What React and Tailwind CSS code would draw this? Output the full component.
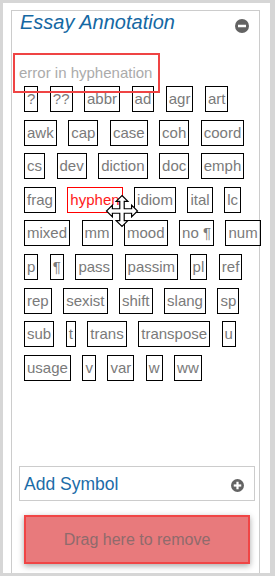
import React from "react";

const rows = [
  "?", "??", "abbr", "ad", "agr", "art",
  "awk", "cap", "case", "coh", "coord",
  "cs", "dev", "diction", "doc", "emph",
  "frag", "hyphen", "idiom", "ital", "lc",
  "mixed", "mm", "mood", "no ¶", "num",
  "p", "¶", "pass", "passim", "pl", "ref",
  "rep", "sexist", "shift", "slang", "sp",
  "sub", "t", "trans", "transpose", "u",
  "usage", "v", "var", "w", "ww",
];

function MoveCursor() {
  return (
    <svg width="34" height="34" viewBox="-1 -1 23 23">
      <path
        d="M10.5 0 L14.5 4 L12 4 L12 9 L17 9 L17 6.5 L21 10.5 L17 14.5 L17 12 L12 12 L12 17 L14.5 17 L10.5 21 L6.5 17 L9 17 L9 12 L4 12 L4 14.5 L0 10.5 L4 6.5 L4 9 L9 9 L9 4 L6.5 4 Z"
        fill="#ffffff"
        stroke="#000000"
        strokeWidth="0.8"
        strokeLinejoin="miter"
      />
    </svg>
  );
}

function MinusCircle() {
  return (
    <svg width="14" height="14" viewBox="0 0 14 14" className="mt-[8px]">
      <circle cx="7" cy="7" r="7" fill="#636363" />
      <rect x="3" y="5.75" width="8" height="2.5" fill="#ffffff" />
    </svg>
  );
}

function PlusCircle() {
  return (
    <svg width="13" height="13" viewBox="0 0 13 13" className="mt-[4px]">
      <circle cx="6.5" cy="6.5" r="6.5" fill="#636363" />
      <rect x="2.75" y="5.4" width="7.5" height="2.2" fill="#ffffff" />
      <rect x="5.4" y="2.75" width="2.2" height="7.5" fill="#ffffff" />
    </svg>
  );
}

export default function App() {
  return (
    <div
      className="h-[576px] w-[275px] bg-[#d6d6d6] pt-[3px] pb-[3px] pl-[3px] pr-[5px]"
      style={{ fontFamily: '"Liberation Sans", Arial, sans-serif' }}
    >
      <div className="h-full bg-white pl-[8px] pr-[10px] pt-[7px]">
        <div className="relative flex h-full flex-col border-x border-t border-[#cccccc]">
          <div className="flex items-start justify-between pl-[8px] pr-[10px]">
            <h2 className="text-[20px] leading-[22px] italic text-[#1568a3]">
              Essay Annotation
            </h2>
            <MinusCircle />
          </div>

          <p className="ml-[7px] mt-[30.6px] text-[15px] leading-[17px] text-[#ababab]">
            error in hyphenation
          </p>

          <div className="ml-[12px] mt-[5.4px] flex w-[244px] flex-wrap gap-x-[11.5px] gap-y-[7.625px]">
            {rows.map((t) =>
              t === "hyphen" ? (
                <span
                  key={t}
                  className="border border-[#ff0000] px-[2px] py-[3px] text-[15px] leading-[18px] text-[#ff1a1a]"
                >
                  {t}
                </span>
              ) : (
                <span
                  key={t}
                  className="border border-black px-[2px] py-[3px] text-[15px] leading-[18px] text-[#7a7a7a]"
                >
                  {t}
                </span>
              )
            )}
          </div>

          <div className="absolute left-[1px] top-[42px] h-[40px] w-[147px] border-2 border-[#ef4444]" />

          <div className="absolute left-[93px] top-[183px]">
            <MoveCursor />
          </div>

          <div className="mt-auto mb-[9px]">
            <div className="ml-[7px] flex h-[35px] w-[236px] items-center justify-between border border-[#cccccc] pl-[4px] pr-[10px]">
              <span className="text-[17.5px] leading-[20px] text-[#1b6ca8]">Add Symbol</span>
              <PlusCircle />
            </div>
            <div className="ml-[12px] mt-[14px] flex h-[49px] w-[226px] items-center justify-center border-2 border-[#f04545] bg-[#e87a7c] shadow-[0_2px_6px_rgba(0,0,0,0.35)]">
              <span className="text-[16px] text-[#8f6b6c]">Drag here to remove</span>
            </div>
          </div>
        </div>
      </div>
    </div>
  );
}
